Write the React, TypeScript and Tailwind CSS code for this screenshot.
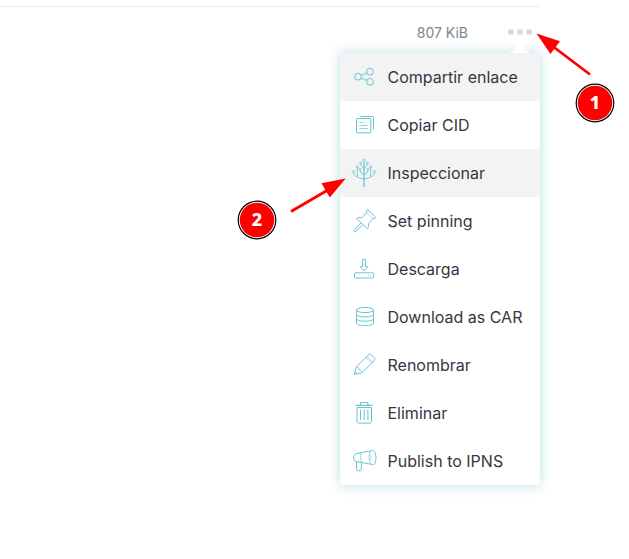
import type { ReactNode } from 'react';

const icons: Record<string, ReactNode> = {
  share: (
    <>
      <circle cx="6" cy="11.7" r="3.4" />
      <circle cx="18" cy="6.7" r="3.4" />
      <circle cx="18" cy="16.8" r="3.4" />
      <path d="M9 9.9l5.7-2.4M9.4 11l5.8-2.4M9.4 12.5l5.7 2.3M9 13.7l5.7 2.4" strokeWidth=".6" />
    </>
  ),
  copy: (
    <>
      <rect x="4.5" y="5.5" width="14.4" height="14.4" rx=".8" />
      <path d="M8.5 3.5h12.2a.8.8 0 0 1 .8.8v12.2" />
      <path d="M7.2 9.5h4M7.2 12.5h8.6M7.2 15.5h8.6" strokeWidth=".7" />
    </>
  ),
  tree: (
    <>
      <path d="M11.5 23.2V1M12.5 23.2V1" strokeWidth=".6" />
      <path d="M12 18.2C7.5 16.8 2.6 16.4 1.6 11.8M12 18.2c4.5-1.4 9.4-1.8 10.4-6.4M5.6 15.4C5.2 13 5.2 10 5.4 7M18.4 15.4c.4-2.4.4-5.4.2-8.4M12 13.6c-2.6-.8-3.6-2-3.8-4.1M12 13.6c2.6-.8 3.6-2 3.8-4.1M12 7.2C10 6.6 9 5 8.8 3M12 7.2c2-.6 3-2.2 3.2-4.2" strokeWidth=".9" />
      <g strokeWidth=".75">
        <circle cx="12" cy="-.6" r="1.2" />
        <circle cx="8.6" cy="2" r="1" />
        <circle cx="15.4" cy="2" r="1" />
        <circle cx="5.4" cy="5.8" r="1.1" />
        <circle cx="18.6" cy="5.8" r="1.1" />
        <circle cx="8" cy="8.4" r="1" />
        <circle cx="16" cy="8.4" r="1" />
        <circle cx="1.4" cy="10.6" r="1.1" />
        <circle cx="22.6" cy="10.6" r="1.1" />
        <circle cx="12" cy="24.4" r="1.2" />
      </g>
    </>
  ),
  pin: (
    <>
      <path d="M14.4 1.6l1.3-.9 7.9 7.6-.9 1.4-1.7-.3-4.6 5.4c.5 2 .1 3.8-1 4.9L4.6 9.7c1.2-1.2 3-1.5 5-1l5.2-5z" />
      <path d="M14.8 3.7l6.2 5.7" strokeWidth=".6" />
      <path d="M8.6 14.1l-6.2 7.1-.3 1.7 1.7-.4 6.7-6.7" />
    </>
  ),
  download: (
    <>
      <path d="M10.6 2.4h2.8v7.3h2.4L12 13.9 8.2 9.7h2.4z" />
      <rect x="2.5" y="15.8" width="19.2" height="5.2" rx="1.1" />
      <path d="M16 18.5h1M18.2 18.5h1" strokeWidth=".7" />
    </>
  ),
  database: (
    <>
      <ellipse cx="13" cy="5" rx="8.5" ry="2.6" />
      <path d="M4.5 5v13.1c0 1.5 3.8 2.6 8.5 2.6s8.5-1.1 8.5-2.6V5M4.5 9.4c0 1.5 3.8 2.5 8.5 2.5s8.5-1 8.5-2.5M4.5 13.7c0 1.5 3.8 2.5 8.5 2.5s8.5-1 8.5-2.5" />
    </>
  ),
  pencil: (
    <>
      <path d="M2.4 21.4l1.8-7.2L16.2 2.1c1-1 2.3-1 3.3-.1l2.6 2.6c1 1 1 2.2 0 3.2L9.7 19.8z" />
      <path d="M4.2 14.2c2-.4 3 .6 2.7 2.6 2-.2 3.1.9 2.8 3M14 4.4l5.8 5.7M3.1 18.7l2.1 2" strokeWidth=".75" />
      <path d="M15.1 3.3l5.8 5.7" strokeWidth=".5" />
    </>
  ),
  trash: (
    <>
      <path d="M3.8 4.4h16.8M8.4 4.2V2.8c0-.8.4-1.3 1.2-1.3h5.2c.8 0 1.2.5 1.2 1.3v1.4" strokeWidth="1.2" />
      <path d="M5 6.5h14.5v14a1.6 1.6 0 0 1-1.6 1.6H6.6A1.6 1.6 0 0 1 5 20.5z" />
      <path d="M8.5 8.5v10.7M12.2 8.5v10.7M15.9 8.5v10.7" />
    </>
  ),
  megaphone: (
    <>
      <path d="M4.3 4.7L19 1.8c1.1-.9 2.4-.8 3.2.3 2.2 3.5 2.4 8.5.5 12.6-.6 1.2-2 1.5-3 .7L4.8 12.6c-1.7.2-2.8-1.1-3.2-3.2-.4-2.4.8-4.5 2.7-4.7z" />
      <path d="M9.2 4c-.8 2.7-.7 6.2.2 9.2M18.2 2c-1.7 3.8-1.6 9 .3 13.2M17.3 6.1c2.2.1 2.7 4.1.6 4.7" strokeWidth=".7" />
      <path d="M4.5 12.7v7.8c0 .8.5 1.3 1.3 1.3h2.3c.8 0 1.3-.5 1.3-1.3v-6.8" />
    </>
  ),
};

const items = [
  { icon: 'share', label: 'Compartir enlace', active: true },
  { icon: 'copy', label: 'Copiar CID' },
  { icon: 'tree', label: 'Inspeccionar', active: true },
  { icon: 'pin', label: 'Set pinning' },
  { icon: 'download', label: 'Descarga' },
  { icon: 'database', label: 'Download as CAR' },
  { icon: 'pencil', label: 'Renombrar' },
  { icon: 'trash', label: 'Eliminar' },
  { icon: 'megaphone', label: 'Publish to IPNS' },
];

function Marker({ n, x, y }: { n: number; x: number; y: number }) {
  return (
    <g>
      <circle cx={x} cy={y} r="19.4" fill="#000" />
      <circle cx={x} cy={y} r="18.2" fill="#fff" />
      <circle cx={x} cy={y} r="17.3" fill="#f00" />
      <text x={x} y={y + 6} textAnchor="middle" fill="#fff" className="font-['Noto_Sans','Open_Sans',sans-serif] text-[18px] font-extrabold">
        {n}
      </text>
    </g>
  );
}

export default function App() {
  return (
    <main className="relative h-[559px] w-[629px] overflow-hidden bg-white font-['Inter',sans-serif]">
      <div className="w-[540px] pt-1.5">
        <div className="flex h-[47px] items-center justify-end border-t border-[#ebebed] pt-1">
          <span className="mr-10 text-[14px] font-[370] text-[#7f8491]">807 KiB</span>
          <button className="mr-2 flex gap-[3px]" aria-label="Menu">
            <i className="size-1.5 rounded-full bg-[#d9dbe2]" />
            <i className="size-1.5 rounded-full bg-[#d9dbe2]" />
            <i className="size-1.5 rounded-full bg-[#d9dbe2]" />
          </button>
        </div>
        <div className="relative ml-auto w-[200px] rounded bg-white shadow-[0_0_12px_rgba(105,196,205,0.5)]">
          <svg className="absolute -top-[9px] right-[9px]" width="22" height="9">
            <path d="M1 9L11 0l10 9z" fill="#fff" />
          </svg>
          <ul className="overflow-hidden rounded">
            {items.map(({ icon, label, active }) => (
              <li key={label} className={`flex h-12 items-center gap-[11.5px] pl-3 ${active ? 'bg-[#f3f3f3]' : ''}`}>
                <svg className="size-6 shrink-0 overflow-visible" viewBox="0 0 24 24" fill="none" stroke="#69c4cd" strokeWidth="1" strokeLinejoin="round">
                  {icons[icon]}
                </svg>
                <span className="whitespace-nowrap text-[16px] font-[370] leading-6 text-[#34373f]">{label}</span>
              </li>
            ))}
          </ul>
        </div>
      </div>
      <svg className="pointer-events-none absolute inset-0" width="629" height="559">
        <path d="M590 74.5L553 46.5M291 211.5L327 190.5" stroke="#f00" strokeWidth="2.8" />
        <path d="M536.5 33.5L560 41.2 550.5 54zM345.7 178.5L329.8 197.5 321.5 183.2z" fill="#f00" />
        <Marker n={1} x={595} y={103} />
        <Marker n={2} x={257} y={220} />
      </svg>
    </main>
  );
}
